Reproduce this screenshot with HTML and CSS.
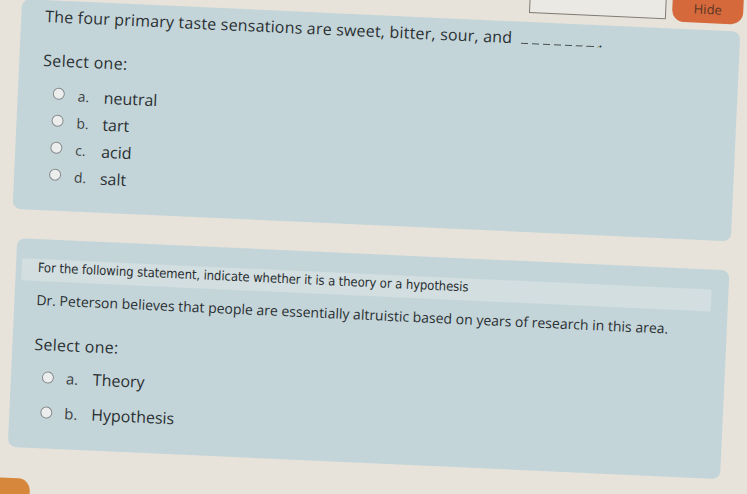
FILE: index.html
```html
<!DOCTYPE html>
<html lang="en">
<head>
<meta charset="utf-8">
<title>Quiz</title>
<link rel="stylesheet" href="styles.css">
</head>
<body>
<div class="stage">
  <div class="topbar">
    <div class="field"></div>
    <button class="hide-btn" type="button">Hide</button>
  </div>

  <section class="card card-q1">
    <p class="qtext">The four primary taste sensations are sweet, bitter, sour, and <span class="blank"></span>.</p>
    <p class="prompt">Select one:</p>
    <div class="answers">
      <label class="opt"><span class="radio"></span><span class="letter">a.</span><span class="label">neutral</span></label>
      <label class="opt"><span class="radio"></span><span class="letter">b.</span><span class="label">tart</span></label>
      <label class="opt"><span class="radio"></span><span class="letter">c.</span><span class="label">acid</span></label>
      <label class="opt"><span class="radio"></span><span class="letter">d.</span><span class="label">salt</span></label>
    </div>
  </section>

  <section class="card card-q2">
    <div class="band">For the following statement, indicate whether it is a theory or a hypothesis</div>
    <p class="stmt">Dr. Peterson believes that people are essentially altruistic based on years of research in this area.</p>
    <p class="prompt">Select one:</p>
    <div class="answers answers-lg">
      <label class="opt"><span class="radio"></span><span class="letter">a.</span><span class="label">Theory</span></label>
      <label class="opt"><span class="radio"></span><span class="letter">b.</span><span class="label">Hypothesis</span></label>
    </div>
  </section>

  <div class="nav-tab"></div>
</div>
</body>
</html>
```

FILE: styles.css
```css
html, body {
  margin: 0;
  height: 100%;
  overflow: hidden;
  background: #e7e3da;
}

.stage {
  width: 747px;
  display: flex;
  flex-direction: column;
  transform-origin: 0 0;
  transform: rotate(2.6deg) translateY(-46px);
  font-family: "Open Sans", "Noto Sans", sans-serif;
  color: #2a2f32;
}

.topbar {
  height: 38px;
  display: flex;
  justify-content: flex-end;
  align-items: flex-start;
  gap: 6px;
  padding-right: 4px;
}

.field {
  width: 135px;
  height: 33px;
  border: 1px solid #7f7a74;
  background: #ebe9e3;
}

.hide-btn {
  width: 71px;
  height: 37px;
  border: 0;
  border-radius: 0 0 12px 12px;
  background: #d5693b;
  color: #5a3524;
  font: 13px "Open Sans", sans-serif;
  padding: 8px 0 0;
}

.card {
  background: #c4d5d9;
  border-radius: 8px;
  box-sizing: border-box;
}

.card-q1 {
  margin: 6px 0 0 22px;
  width: 719px;
  height: 210px;
  padding: 6px 0 0 24px;
}

.card-q2 {
  margin: 29px 0 0 28px;
  width: 713px;
  height: 209px;
  padding: 20px 0 0 22px;
}

p { margin: 0; }

.qtext {
  font-size: 16px;
  line-height: 20px;
  letter-spacing: 0.2px;
}

.blank {
  display: inline-block;
  width: 78px;
  height: 1.5px;
  margin-left: 4px;
  background: repeating-linear-gradient(to right, #4a4f52 0 7px, transparent 7px 11px);
}

.prompt {
  font-size: 16px;
  line-height: 20px;
  letter-spacing: 0.3px;
  margin-top: 24px;
}

.answers {
  margin-top: 11px;
  display: flex;
  flex-direction: column;
}

.opt {
  height: 27px;
  display: flex;
  align-items: center;
  font-size: 16px;
}

.radio {
  width: 10px;
  height: 10px;
  border: 1.5px solid #858a8c;
  border-radius: 50%;
  background: #eceeed;
  margin: 0 13px 4px 11px;
  flex: none;
}

.letter {
  width: 26px;
  font-size: 14px;
  color: #3b4043;
}

.band {
  margin-left: -16px;
  width: 690px;
  height: 22px;
  box-sizing: border-box;
  padding-left: 16px;
  background: #d2dee0;
  font-family: "Liberation Sans Narrow", "DejaVu Sans Condensed", "Liberation Sans", sans-serif;
  font-size: 13px;
  line-height: 17px;
  letter-spacing: -0.1px;
}

.stmt {
  font-size: 14px;
  line-height: 20px;
  margin-top: 9px;
}

.answers-lg { margin-top: 5px; }

.answers-lg .opt {
  height: 35px;
  font-size: 16px;
}

.answers-lg .radio { margin: 0 12px 0 9px; }

.answers-lg .letter {
  width: 27px;
  font-size: 15px;
}

.nav-tab {
  margin-top: 31px;
  width: 52px;
  height: 20px;
  border-radius: 0 12px 0 0;
  background: #d6873c;
}
```
